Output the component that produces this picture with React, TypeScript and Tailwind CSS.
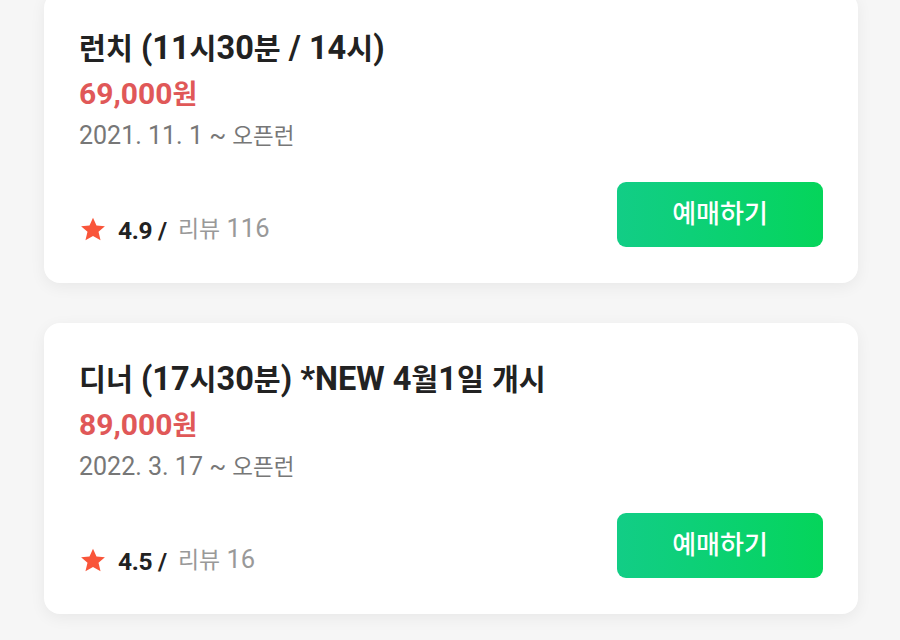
import React from "react";

type Item = {
  title: string;
  price: string;
  date: string;
  rating: string;
  reviews: string;
};

const items: Item[] = [
  { title: "런치 (11시30분 / 14시)", price: "69,000원", date: "2021. 11. 1 ~ 오픈런", rating: "4.9", reviews: "리뷰 116" },
  { title: "디너 (17시30분) *NEW 4월1일 개시", price: "89,000원", date: "2022. 3. 17 ~ 오픈런", rating: "4.5", reviews: "리뷰 16" },
];

function Mixed({ text }: { text: string }) {
  const parts = text.split(/([\uAC00-\uD7A3\u3131-\u318E]+)/);
  return (
    <>
      {parts.map((p, i) =>
        /[\uAC00-\uD7A3\u3131-\u318E]/.test(p) ? (
          <span key={i} className="text-[0.9em]">
            {p}
          </span>
        ) : (
          <React.Fragment key={i}>{p}</React.Fragment>
        )
      )}
    </>
  );
}

function Star() {
  return (
    <svg width="28" height="27" viewBox="0 0 24 24" className="shrink-0">
      <path
        d="M12 1.5l3.1 7 7.5.6-5.7 5 1.8 7.5L12 17.7l-6.7 3.9 1.8-7.5-5.7-5 7.5-.6z"
        fill="#f9553a"
      />
    </svg>
  );
}

function Card({ item }: { item: Item }) {
  return (
    <div className="bg-white rounded-[16px] shadow-[0_4px_16px_rgba(0,0,0,0.06)] pt-[36px] pb-[36px] pl-[35px] pr-[35px]">
      <div className="h-[40px] flex items-center text-[32.5px] leading-[40px] font-bold text-[#222222] whitespace-pre">
        <span>
          <Mixed text={item.title} />
        </span>
      </div>
      <div className="mt-[6px] h-[40px] flex items-center text-[30px] leading-[40px] font-bold text-[#e05858]">
        <span>
          <Mixed text={item.price} />
        </span>
      </div>
      <div className="mt-[6px] h-[32px] flex items-center text-[25px] leading-[32px] text-[#777777] whitespace-pre">
        <span>
          <Mixed text={item.date} />
        </span>
      </div>
      <div className="mt-[30px] flex items-end justify-between">
        <div className="mb-[5px] flex items-center h-[26px]">
          <Star />
          <span className="ml-[11px] text-[24.5px] font-bold text-[#222222] leading-[24px] translate-y-[2px] tracking-[-0.3px]">
            {item.rating} /
          </span>
          <span className="ml-[11px] text-[25.5px] text-[#999999] leading-[24px]">
            <Mixed text={item.reviews} />
          </span>
        </div>
        <button className="w-[206px] h-[65px] rounded-[9px] bg-gradient-to-r from-[#12cd86] to-[#05d55a] text-white text-[26px] font-medium">
          예매하기
        </button>
      </div>
    </div>
  );
}

export default function App() {
  return (
    <div
      className="min-h-[640px] w-[900px] bg-[#f6f6f6] overflow-hidden"
      style={{ fontFamily: "Roboto, 'Noto Sans CJK KR', sans-serif" }}
    >
      <div className="ml-[44px] w-[814px] mt-[-8px] flex flex-col gap-[40px]">
        {items.map((it) => (
          <Card key={it.title} item={it} />
        ))}
      </div>
    </div>
  );
}
